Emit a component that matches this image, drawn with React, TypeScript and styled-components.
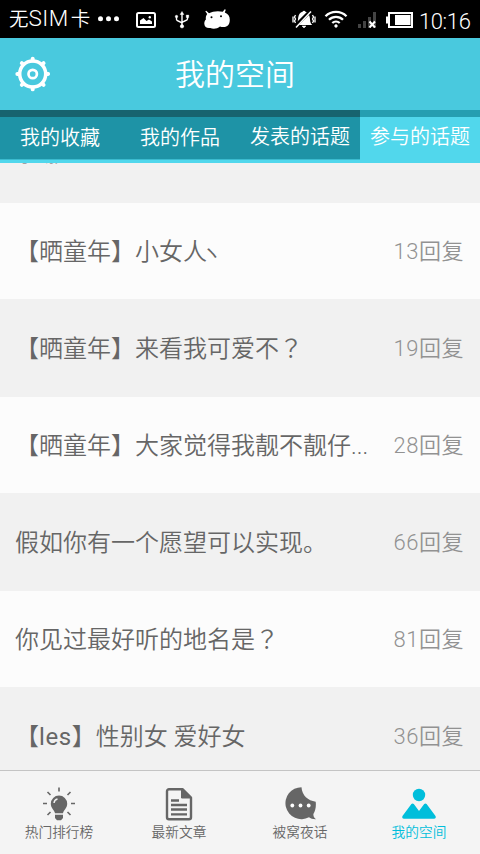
import React from "react";
import styled, { createGlobalStyle } from "styled-components";

const GlobalStyle = createGlobalStyle`
  * { box-sizing: border-box; }
  body { margin: 0; background: #f1f1f1; }
`;

const Screen = styled.div`
  width: 480px;
  height: 854px;
  display: flex;
  flex-direction: column;
  overflow: hidden;
  font-family: Roboto, "Noto Sans CJK SC", sans-serif;
  font-weight: 350;
  white-space: nowrap;
`;

const StatusBar = styled.div`
  height: 38px;
  flex: none;
  display: flex;
  align-items: center;
  background: #000;
  color: #fff;
  padding: 0 9px;
`;

const Carrier = styled.div`
  width: 84px;
  font-size: 19.5px;
  line-height: 36px;
  padding-top: 2px;
`;

const Latin = styled.span`
  font-size: 22.5px;
  font-weight: 300;
  line-height: 1;
  letter-spacing: 0.5px;
  margin-right: 2px;
`;

const StatusIcon = styled.svg<{ $gap: number }>`
  flex: none;
  margin-left: ${(p) => p.$gap}px;
`;

const Clock = styled.div`
  margin-left: 5px;
  font-size: 22px;
  font-weight: 300;
  letter-spacing: -0.4px;
  line-height: 38px;
  padding-top: 5px;
`;

const Header = styled.header`
  height: 72px;
  flex: none;
  display: grid;
  grid-template-columns: 60px 350px 1fr;
  align-items: center;
  background: #49c9de;
`;

const GearButton = styled.button`
  border: 0;
  background: none;
  padding: 0 0 0 14px;
  display: flex;
`;

const Title = styled.h1`
  margin: 0;
  text-align: center;
  color: #fff;
  font-size: 30px;
  line-height: 70px;
  padding-top: 2px;
  font-weight: 350;
`;

const Tabs = styled.nav`
  height: 53px;
  flex: none;
  display: grid;
  grid-template-columns: repeat(4, 1fr);
  background: #51d7ec;
`;

const Tab = styled.div<{ $active?: boolean; $shift?: number }>`
  height: ${(p) => (p.$active ? 53 : 50)}px;
  border-top: 7px solid ${(p) => (p.$active ? "#259eb1" : "#17636f")};
  border-bottom: ${(p) => (p.$active ? "0" : "1px solid #3bbbcf")};
  background: ${(p) => (p.$active ? "#51d7ec" : "#1e93a6")};
  color: #fff;
  font-size: 20px;
  line-height: 38px;
  padding-top: ${(p) => p.$shift ?? 1}px;
  text-align: center;
`;

const List = styled.main`
  flex: 1;
  min-height: 0;
  overflow: hidden;
  display: flex;
  flex-direction: column;
`;

const Row = styled.div<{ $light: boolean }>`
  flex: none;
  height: ${(p) => (p.$light ? 96 : 98)}px;
  display: flex;
  align-items: center;
  justify-content: space-between;
  padding: 2px 16px 0 15px;
  background: ${(p) => (p.$light ? "#fcfcfc" : "#f1f1f1")};
  &:first-child {
    margin-top: -58px;
    padding-top: 0;
    padding-bottom: 2px;
  }
`;

const Topic = styled.div`
  width: 356px;
  height: 36px;
  overflow: hidden;
  text-overflow: ellipsis;
  color: #666;
  font-size: 24px;
  line-height: 36px;
`;

const CenteredMark = styled.span`
  font-family: "Noto Sans CJK TC", sans-serif;
  line-height: 1;
`;

const Tick = styled.span`
  font-size: 21px;
  line-height: 1;
  margin-left: -6px;
`;

const Word = styled.span`
  font-weight: 400;
  letter-spacing: 0.6px;
`;

const Replies = styled.div`
  color: #929292;
  font-size: 22px;
  line-height: 36px;
  letter-spacing: 0.5px;
`;

const BottomBar = styled.nav`
  height: 84px;
  flex: none;
  display: grid;
  grid-template-columns: 118px 122px 120px 118px;
  border-top: 1px solid #c4c4c4;
  background: #f4f4f4;
`;

const BottomItem = styled.div<{ $active?: boolean }>`
  display: flex;
  flex-direction: column;
  align-items: center;
  padding-top: 15px;
  color: ${(p) => (p.$active ? "#00bedb" : "#666")};
  font-size: 13.7px;
  line-height: 20px;
`;

const topics: { id: number; title: React.ReactNode; replies: number }[] = [
  { id: 0, title: "李娜", replies: 11 },
  { id: 1, title: <>【晒童年】小女人<Tick>ヽ</Tick></>, replies: 13 },
  { id: 2, title: <>【晒童年】来看我可爱不<CenteredMark>？</CenteredMark></>, replies: 19 },
  { id: 3, title: "【晒童年】大家觉得我靓不靓仔...", replies: 28 },
  { id: 4, title: "假如你有一个愿望可以实现。", replies: 66 },
  { id: 5, title: <>你见过最好听的地名是<CenteredMark>？</CenteredMark></>, replies: 81 },
  { id: 6, title: <>【<Word>les</Word>】性别女 爱好女</>, replies: 36 },
];

const angles = [0, 45, 90, 135, 180, 225, 270, 315];

function Gear() {
  return (
    <svg width="36" height="36" viewBox="0 0 36 36" fill="none" stroke="#fff">
      <circle cx="18.700" cy="18" r="13" strokeWidth="3.500" />
      <circle cx="18.700" cy="18" r="4.200" strokeWidth="2.700" />
      {angles.map((a) => (
        <path key={a} d="M18.700 2.600V4.500" strokeWidth="3.900" strokeLinecap="round" transform={`rotate(${a} 18.700 18)`} />
      ))}
    </svg>
  );
}

function Bulb() {
  return (
    <svg width="34" height="36" viewBox="0 0 34 36" fill="currentColor">
      <path d="M17 9.500a8.200 8.200 0 0 0-8.200 8.200c0 4.500 3.600 6 4.200 9.600h8c.6-3.600 4.200-5.100 4.200-9.600A8.200 8.200 0 0 0 17 9.500z" />
      <path d="M13 28.800h8v3.200l-2 2.200h-4l-2-2.200z" />
      <path d="M12 17c.3-2.200 1.500-3.600 3.500-4" stroke="#f4f4f4" strokeWidth="1.400" fill="none" />
      <path d="M17 1.500v4M5.500 6l3 3M28.500 6l-3 3M1 17.500h4M29 17.500h4M5.500 29l3-3M28.500 29l-3-3" stroke="currentColor" strokeWidth="1.600" />
    </svg>
  );
}

function Doc() {
  return (
    <svg width="34" height="36" viewBox="0 0 34 36" fill="none" stroke="currentColor">
      <path d="M20.500 3.200H7a2 2 0 0 0-2 2v26a2 2 0 0 0 2 2h20a2 2 0 0 0 2-2V11.500z" strokeWidth="2.400" strokeLinejoin="round" />
      <path d="M19.500 2.500v9.500h9.800z" fill="currentColor" strokeWidth="1" />
      <path d="M9 14.500h8M9 19h16M9 23.500h16M9 28.300h16" strokeWidth="2.300" />
    </svg>
  );
}

function Chat() {
  return (
    <svg width="34" height="36" viewBox="0 0 34 36" fill="currentColor">
      <path d="M18.500 1.200A16 16 0 1 0 26 31.300c1.600 1.300 4 2 7 1.900-1.800-1-2.800-3-2.600-5.200 1.900-3.300 2.900-7.500 2.300-12.300C25 14.500 19 9.500 18.500 1.200z" />
      <g fill="#fff">
        <circle cx="9.300" cy="19.500" r="1.900" />
        <circle cx="17.500" cy="19.500" r="1.900" />
        <circle cx="25.700" cy="19.500" r="1.900" />
      </g>
    </svg>
  );
}

function Person() {
  return (
    <svg width="36" height="36" viewBox="0 0 36 36" fill="currentColor">
      <circle cx="18" cy="9" r="6.200" />
      <path d="M12.800 18l5.200 7 5.200-7c.8-.8 1.600-.8 2.400 0L34.500 30c.7 1.500 0 2.700-1.500 2.700H3c-1.500 0-2.200-1.200-1.500-2.700L10.400 18c.8-.8 1.600-.8 2.400 0z" />
    </svg>
  );
}

function StatusIcons() {
  return (
    <>
      <StatusIcon $gap={4} width="22" height="8" viewBox="0 0 22 8" fill="#fff">
        <circle cx="3.500" cy="3.700" r="2.500" />
        <circle cx="11.500" cy="3.700" r="2.500" />
        <circle cx="19.500" cy="3.700" r="2.500" />
      </StatusIcon>
      <StatusIcon $gap={17} width="20" height="20" viewBox="0 0 20 20" fill="none">
        <rect x="1" y="4" width="18" height="14" rx="1.500" stroke="#fff" strokeWidth="2" />
        <path d="M4 15v-3.500L7.500 9l3 3 2.500-1.500 3 2V15z" fill="#fff" />
        <circle cx="13.800" cy="8.200" r="1.200" fill="#fff" />
      </StatusIcon>
      <StatusIcon $gap={18} width="16" height="20" viewBox="0 0 16 20" fill="none" stroke="#fff" strokeWidth="1.400">
        <path d="M8 4v13M2.500 8v2.500c0 2 5.500 2 5.500 4M13.500 7.500V10c0 2-5.500 2-5.500 4" />
        <path d="M8 2.500l1.800 3H6.200z" fill="#fff" strokeWidth=".5" />
        <circle cx="8" cy="17.300" r="1.700" fill="#fff" strokeWidth=".5" />
        <circle cx="2.500" cy="7.500" r="1.200" fill="#fff" strokeWidth=".5" />
        <path d="M12.200 6h2.600v2.600h-2.600z" fill="#fff" strokeWidth=".3" />
      </StatusIcon>
      <StatusIcon $gap={14} width="28" height="21" viewBox="0 0 28 21" fill="#fff">
        <path d="M1.300 2.200l.9-.5L5 4.200C8.500 2.200 14 1.600 18.800 2.700L20.700.2l1.100.6-1 2.700c3.300 1.300 5 3.700 5 7.200 0 4.800-2.500 7.400-6.300 7.300-1.500 0-2.500-.1-3.500-.5-3 2.500-7 2.600-9.700 1.500-3.300.6-6-1.200-6-4.200 0-1.800.6-3.100 1.600-4.200C1.500 8.500 2 6.500 3.200 5z" />
        <circle cx="7.500" cy="8.300" r="1" fill="#000" />
        <circle cx="17" cy="7.200" r="1" fill="#000" />
      </StatusIcon>
      <StatusIcon $gap={60} width="24" height="19" viewBox="0 0 24 19" fill="none" stroke="#fff">
        <path d="M3.800 15c2.200-2 2-4 2.400-7.500C6.600 4.300 8 2.300 10.500 1.700c.8-1.200 2.200-1.200 3 0 2.400.6 3.900 2.600 4.300 5.800.4 3.500.2 5.500 2.400 7.500z" fill="#fff" stroke="none" />
        <path d="M10 16h4l-2 2z" fill="#fff" strokeWidth=".5" />
        <path d="M2.500 17L18.500 1" stroke="#000" strokeWidth="3.600" />
        <path d="M4 17.500L19 1.500" strokeWidth="1.500" />
        <path d="M3.500 5l-1 2 1 2-1 2 1 2M1 6.500v6M20.500 5l1 2-1 2 1 2-1 2M23 6.500v6" strokeWidth="1.300" />
      </StatusIcon>
      <StatusIcon $gap={8} width="24" height="18" viewBox="0 0 24 18" fill="none" stroke="#fff" strokeWidth="2.300">
        <path d="M1.500 6.200a15 15 0 0 1 21 0M5 9.800a10 10 0 0 1 14 0M8.300 13a5.500 5.500 0 0 1 7.400 0" />
        <circle cx="12" cy="16" r="1.400" fill="#fff" strokeWidth=".5" />
      </StatusIcon>
      <StatusIcon $gap={9} width="20" height="18" viewBox="0 0 20 18">
        <path d="M1 14h3v4H1zM6 11h3v7H6zM11 7h3v11h-3zM16 2h3v16h-3z" fill="#444" />
        <path d="M12.500 11.500l5.500 6M18 11.500l-5.500 6" stroke="#fff" strokeWidth="2" />
      </StatusIcon>
      <StatusIcon $gap={8} width="29" height="20" viewBox="0 0 29 20" fill="none">
        <path d="M3 3h25v16H3v-4.500H1v-7h2z" fill="#fff" />
        <path d="M5 5h21v12H5z" fill="#000" />
        <path d="M10 6h15.500v10H10z" fill="#fff" />
      </StatusIcon>
    </>
  );
}

export default function App() {
  return (
    <Screen>
      <GlobalStyle />
      <StatusBar>
        <Carrier>
          无<Latin>SIM</Latin>卡
        </Carrier>
        <StatusIcons />
        <Clock>10:16</Clock>
      </StatusBar>
      <Header>
        <GearButton aria-label="设置">
          <Gear />
        </GearButton>
        <Title>我的空间</Title>
      </Header>
      <Tabs>
        <Tab $shift={2}>我的收藏</Tab>
        <Tab $shift={2}>我的作品</Tab>
        <Tab>发表的话题</Tab>
        <Tab $active>参与的话题</Tab>
      </Tabs>
      <List>
        {topics.map((t) => (
          <Row key={t.id} $light={t.id % 2 === 1}>
            <Topic>{t.title}</Topic>
            <Replies>{`${t.replies}回复`}</Replies>
          </Row>
        ))}
      </List>
      <BottomBar>
        <BottomItem>
          <Bulb />
          热门排行榜
        </BottomItem>
        <BottomItem>
          <Doc />
          最新文章
        </BottomItem>
        <BottomItem>
          <Chat />
          被窝夜话
        </BottomItem>
        <BottomItem $active>
          <Person />
          我的空间
        </BottomItem>
      </BottomBar>
    </Screen>
  );
}
